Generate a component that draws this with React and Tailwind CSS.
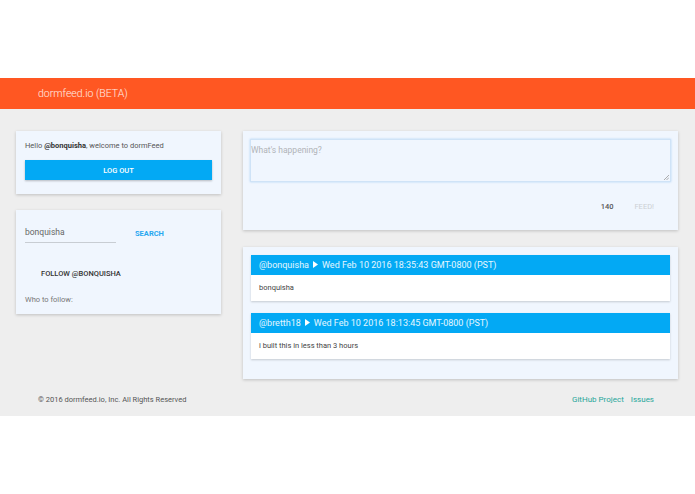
const posts = [
  { user: "bretth18", when: "Wed Feb 10 2016 18:13:45 GMT-0800 (PST)", text: "i built this in less than 3 hours" },
  { user: "bonquisha", when: "Wed Feb 10 2016 18:35:43 GMT-0800 (PST)", text: "bonquisha" },
].reverse();

function Card({ className, children }) {
  return (
    <div className={"bg-[#f0f6fe] shadow-[0_1px_3px_rgba(0,0,0,0.2)] " + className}>
      {children}
    </div>
  );
}

function Post({ post }) {
  return (
    <div className="bg-white shadow-[0_1px_2px_rgba(0,0,0,0.18)]">
      <div className="h-[20px] bg-[#03a9f4] text-white/90 text-[9px] leading-none flex items-center px-[8px] gap-[4px]">
        <span>@{post.user}</span>
        <svg className="block -mt-[1px]" width="5" height="7" viewBox="0 0 5 7"><path d="M0 0 L5 3.5 L0 7 Z" fill="white" /></svg>
        <span>{post.when}</span>
      </div>
      <div className="h-[26px] flex items-center px-[8px] text-[7.5px] text-[#444]">{post.text}</div>
    </div>
  );
}

export default function App() {
  return (
    <div className="w-[695px] h-[494px] bg-white font-['Roboto',sans-serif]">
      <div className="h-[78px]" />
      <header className="h-[31px] bg-[#ff5722] flex items-center pl-[38px] text-[10.5px] font-light text-white/90">
        dormfeed.io (BETA)
      </header>
      <main className="bg-[#eeeeee] h-[307px] flex flex-col">
        <div className="flex gap-[22px] pt-[22px] pl-[16px] pr-[17px]">
          <div className="w-[205px] flex flex-col gap-[16px]">
            <Card className="h-[63px] px-[9px] pt-[9px]">
              <p className="text-[7.5px] text-[#555]">
                Hello <b className="text-[#333]">@bonquisha</b>, welcome to dormFeed
              </p>
              <button className="mt-[9px] w-full h-[20px] bg-[#03a9f4] text-white text-[7.5px] font-medium shadow-[0_1px_2px_rgba(0,0,0,0.25)]">
                LOG OUT
              </button>
            </Card>
            <Card className="h-[104px] px-[9px]">
              <div className="flex items-end pt-[16px]">
                <div className="w-[91px] border-b border-[#c8cdd3] pb-[3px] text-[8.5px] text-[#666]">bonquisha</div>
                <div className="ml-[19px] pb-[4px] text-[7.5px] font-bold text-[#29a8f0]">SEARCH</div>
              </div>
              <div className="mt-[25px] ml-[16px] text-[7.5px] font-medium text-[#333]">FOLLOW @BONQUISHA</div>
              <div className="mt-[15px] text-[7.5px] text-[#777]">Who to follow:</div>
            </Card>
          </div>
          <div className="w-[435px] flex flex-col gap-[17px]">
            <Card className="h-[99px] px-[7px] pt-[8px]">
              <div className="relative h-[43px] bg-[#f0f6fe] border border-[#cfe3f7] shadow-[0_0_2px_rgba(60,150,230,0.35)]">
                <span className="absolute left-0 top-[4px] text-[8.5px] text-[#b0b4b8]">What's happening?</span>
                <svg className="absolute right-[1px] bottom-[1px]" width="5" height="5" viewBox="0 0 5 5">
                  <path d="M5 0 L0 5 M5 2.5 L2.5 5" stroke="#999" strokeWidth="0.8" />
                </svg>
              </div>
              <div className="flex justify-end items-center mt-[19px] pr-[17px] gap-[21px] text-[7.5px]">
                <span className="font-medium text-[#555]">140</span>
                <span className="text-[#ccd0d4]">FEED!</span>
              </div>
            </Card>
            <Card className="h-[132px] px-[8px] pt-[8px] flex flex-col gap-[12px]">
              {posts.map((p) => (
                <Post key={p.user} post={p} />
              ))}
            </Card>
          </div>
        </div>
        <footer className="mt-auto h-[37px] pt-[5px] flex items-center justify-between pl-[38px] pr-[41px] text-[7.5px]">
          <span className="text-[#555]">© 2016 dormfeed.io, Inc. All Rights Reserved</span>
          <span className="flex gap-[7px] text-[#26a69a] text-[8px]">
            <span>GitHub Project</span>
            <span>Issues</span>
          </span>
        </footer>
      </main>
    </div>
  );
}
